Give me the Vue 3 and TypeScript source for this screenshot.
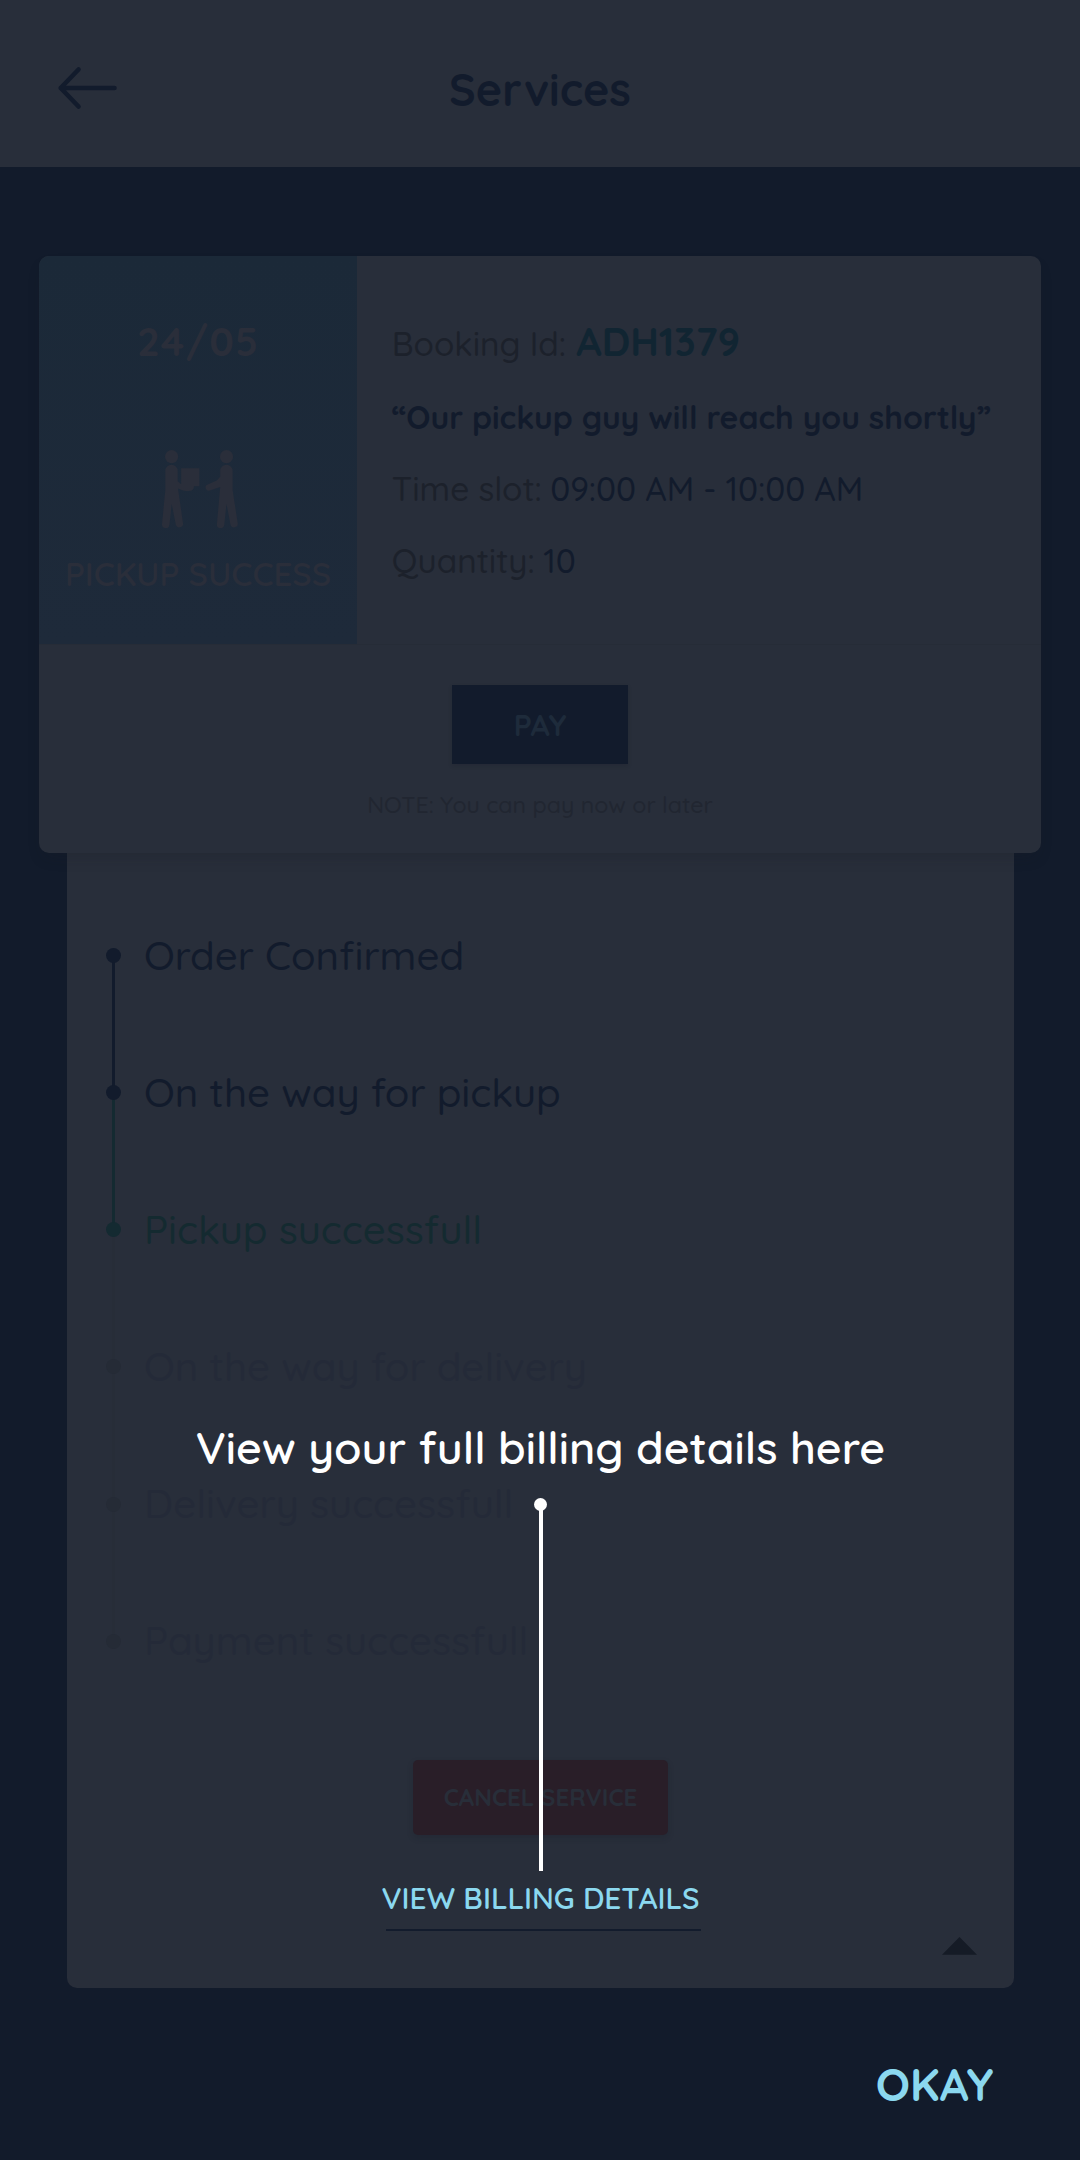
<script setup lang="ts">
interface Step {
  label: string
  state: 'done' | 'current' | 'pending'
}

const steps: Step[] = [
  { label: 'Order Confirmed', state: 'done' },
  { label: 'On the way for pickup', state: 'done' },
  { label: 'Pickup successfull', state: 'current' },
  { label: 'On the way for delivery', state: 'pending' },
  { label: 'Delivery successfull', state: 'pending' },
  { label: 'Payment successfull', state: 'pending' },
]

// Each rail segment takes the state of the step it leads to.
const railState = (i: number): string =>
  i === steps.length - 1 ? 'none' : steps[i + 1].state
</script>

<template>
  <div class="screen">
    <header class="header">
      <svg class="back" width="60" height="44" viewBox="0 0 60 44" fill="none">
        <path d="M21.500 3.500 3.700 22l17.800 18.500M3.700 22H57.500" stroke="#121b2c" stroke-width="4.600" stroke-linecap="round" stroke-linejoin="round" />
      </svg>
      <h1>Services</h1>
    </header>

    <section class="card">
      <div class="summary">
        <div class="status">
          <div class="date">24/05</div>
          <svg class="handover" width="76" height="78" viewBox="0 0 76 78" fill="#2a2e3a">
            <circle cx="9.600" cy="6.700" r="6.600" />
            <path d="M3.300 21a6.200 6.200 0 0 1 12.400 0v10.200l3.400 3V18.200h18.300v18H32c0 3-1.600 4.800-5 4.800-4.500 0-7.700-1-11-2.600L21 73a3.700 3.700 0 0 1-7.300 1.300L9.700 54 7.500 74.800A3.700 3.700 0 0 1 0 74l3.300-34z" />
            <circle cx="64.500" cy="6.700" r="6.600" />
            <path d="M58.200 21a6.200 6.200 0 0 1 12.400 0v19L75.700 73a3.700 3.700 0 0 1-7.300 1.300L64.500 54l-2.200 20.800A3.700 3.700 0 0 1 54.900 74l3.300-37-10.300 3.500a3.200 3.200 0 0 1-2.200-6.100l9-3.900 3.500-3.700z" />
          </svg>
          <div class="state">PICKUP SUCCESS</div>
        </div>
        <div class="details">
          <div class="row"><span class="key">Booking Id:</span><span class="id">ADH1379</span></div>
          <div class="row quote">“Our pickup guy will reach you shortly”</div>
          <div class="row"><span class="key">Time slot:</span><span class="slot-value">09:00 AM - 10:00 AM</span></div>
          <div class="row"><span class="key">Quantity:</span><span class="quantity-value">10</span></div>
        </div>
      </div>
      <div class="payment">
        <button class="pay">PAY</button>
        <div class="note">NOTE: You can pay now or later</div>
      </div>
    </section>

    <section class="panel">
      <ul class="steps">
        <li v-for="(s, i) in steps" :key="s.label" :class="['step', s.state, 'rail-' + railState(i)]">
          <i class="dot"></i>
          <span class="label">{{ s.label }}</span>
        </li>
      </ul>
      <button class="cancel">CANCEL SERVICE</button>
      <a class="billing">VIEW BILLING DETAILS</a>
      <div class="underline"></div>
      <svg class="collapse" width="35" height="18" viewBox="0 0 35 18"><path d="M17.500 0 35 17.700H0z" fill="#151b26" /></svg>
    </section>

    <footer class="footer"><button class="okay">OKAY</button></footer>

    <div class="coach">
      <p>View your full billing details here</p>
      <i class="coach-dot"></i>
      <i class="coach-line"></i>
    </div>
  </div>
</template>

<style>
body {
  margin: 0;
  background: #121b2b;
}
</style>

<style scoped>
.screen {
  position: relative;
  width: 1080px;
  height: 2160px;
  overflow: hidden;
  background: #121b2b;
  font-family: Quicksand, Lato, sans-serif;
  color: #121b2c;
}
button {
  border: 0;
  padding: 0;
  background: none;
  font-family: inherit;
}
.header {
  display: grid;
  grid-template-columns: 120px 1fr 120px;
  align-items: center;
  box-sizing: border-box;
  height: 167px;
  padding-top: 11px;
  background: #282e3a;
}
.back {
  margin: 0 0 3px 56.5px;
}
h1 {
  margin: 0;
  text-align: center;
  font-size: 44.8px;
  font-weight: 700;
  line-height: 54px;
}
.card {
  position: relative;
  z-index: 1;
  width: 1002px;
  height: 596.5px;
  margin: 89px 0 0 39px;
  border-radius: 10px;
  overflow: hidden;
  background: #282e3a;
  box-shadow: 0 8px 16px -6px rgba(20, 24, 34, 0.28);
}
.summary {
  display: flex;
  height: 388px;
}
.status {
  display: flex;
  flex-direction: column;
  align-items: center;
  width: 318px;
  background: linear-gradient(#1b2938, #1e2a3a);
  color: #2a2e3a;
}
.date {
  margin-top: 61px;
  font-size: 40px;
  font-weight: 700;
  line-height: 48px;
  letter-spacing: 1.1px;
}
.handover {
  margin: 85px 0 25px 3px;
}
.state {
  font-size: 33.1px;
  font-weight: 600;
  line-height: 41px;
  white-space: nowrap;
}
.details {
  flex: 1;
  padding: 51.8px 0 0 34.8px;
  font-size: 33.4px;
  font-weight: 500;
}
.row {
  display: flex;
  align-items: baseline;
  height: 72.5px;
  line-height: 72.5px;
  white-space: nowrap;
}
.key {
  color: #1c212b;
}
.id {
  margin-left: 10.3px;
  font-size: 39.8px;
  font-weight: 700;
  line-height: 60px;
  color: #112532;
}
.quote {
  box-sizing: border-box;
  padding-top: 1px;
  font-size: 31.9px;
  font-weight: 700;
}
.slot-value {
  margin-left: 8.3px;
  font-size: 33.3px;
}
.quantity-value {
  margin-left: 8.6px;
}
.payment {
  display: flex;
  flex-direction: column;
  align-items: center;
  border-top: 1px solid #262c37;
}
.pay {
  width: 176px;
  height: 79px;
  margin-top: 40px;
  padding-top: 1px;
  background: #121b2c;
  box-shadow: 0 2px 4px rgba(20, 24, 34, 0.2);
  color: #1e2b3b;
  font-size: 30px;
  font-weight: 700;
}
.note {
  margin-top: 26px;
  font-size: 23.2px;
  font-weight: 500;
  line-height: 30px;
  color: #212631;
}
.panel {
  display: flex;
  flex-direction: column;
  align-items: center;
  box-sizing: border-box;
  width: 947px;
  height: 1135px;
  margin-left: 67px;
  padding-top: 34.6px;
  border-radius: 0 0 10px 10px;
  background: #282e3a;
}
.steps {
  width: 100%;
  margin: 0;
  padding: 0;
  list-style: none;
}
.step {
  position: relative;
  display: flex;
  align-items: center;
  gap: 23px;
  height: 137.1px;
  padding-left: 39px;
}
.step::before {
  content: '';
  position: absolute;
  left: 45px;
  top: 50%;
  width: 3px;
  height: 100%;
}
.rail-done::before {
  background: #121b2c;
}
.rail-current::before {
  background: #142a31;
}
.rail-pending::before {
  background: #272d38;
}
.dot {
  position: relative;
  z-index: 1;
  width: 15px;
  height: 15px;
  border-radius: 50%;
  background: #252b36;
}
.done .dot {
  background: #121b2c;
}
.current .dot {
  background: #142a31;
}
.label {
  padding-bottom: 2px;
  font-size: 40.25px;
  font-weight: 500;
  line-height: 50px;
}
.current .label {
  color: #142a30;
}
.pending .label {
  color: #242a38;
}
.cancel {
  width: 255px;
  height: 75px;
  margin-top: 50.3px;
  padding-bottom: 1px;
  border-radius: 5px;
  background: #291e28;
  box-shadow: 0 3px 6px rgba(20, 24, 34, 0.2);
  color: #282e39;
  font-size: 24.1px;
  font-weight: 700;
}
.billing {
  margin-top: 43px;
  font-size: 29.9px;
  font-weight: 600;
  line-height: 40px;
  color: #8bd8ef;
}
.underline {
  width: 315px;
  height: 2.5px;
  margin: 11px 0 0 5px;
  background: #121b2c;
}
.collapse {
  align-self: flex-end;
  margin: 5.5px 37px 0 0;
}
.footer {
  display: flex;
  justify-content: flex-end;
  padding: 66px 86.5px 0 0;
}
.okay {
  color: #8bd8ef;
  font-size: 45.2px;
  font-weight: 700;
  line-height: 60px;
}
.coach {
  position: absolute;
  z-index: 2;
  top: 1419px;
  left: 0;
  display: flex;
  flex-direction: column;
  align-items: center;
  width: 1081px;
  color: #fff;
}
.coach p {
  margin: 0;
  font-size: 44.6px;
  font-weight: 600;
  line-height: 56px;
}
.coach-dot {
  width: 13px;
  height: 13px;
  margin-top: 23px;
  border-radius: 50%;
  background: #fff;
}
.coach-line {
  width: 4px;
  height: 361px;
  margin-top: -1px;
  background: #fff;
}
</style>
